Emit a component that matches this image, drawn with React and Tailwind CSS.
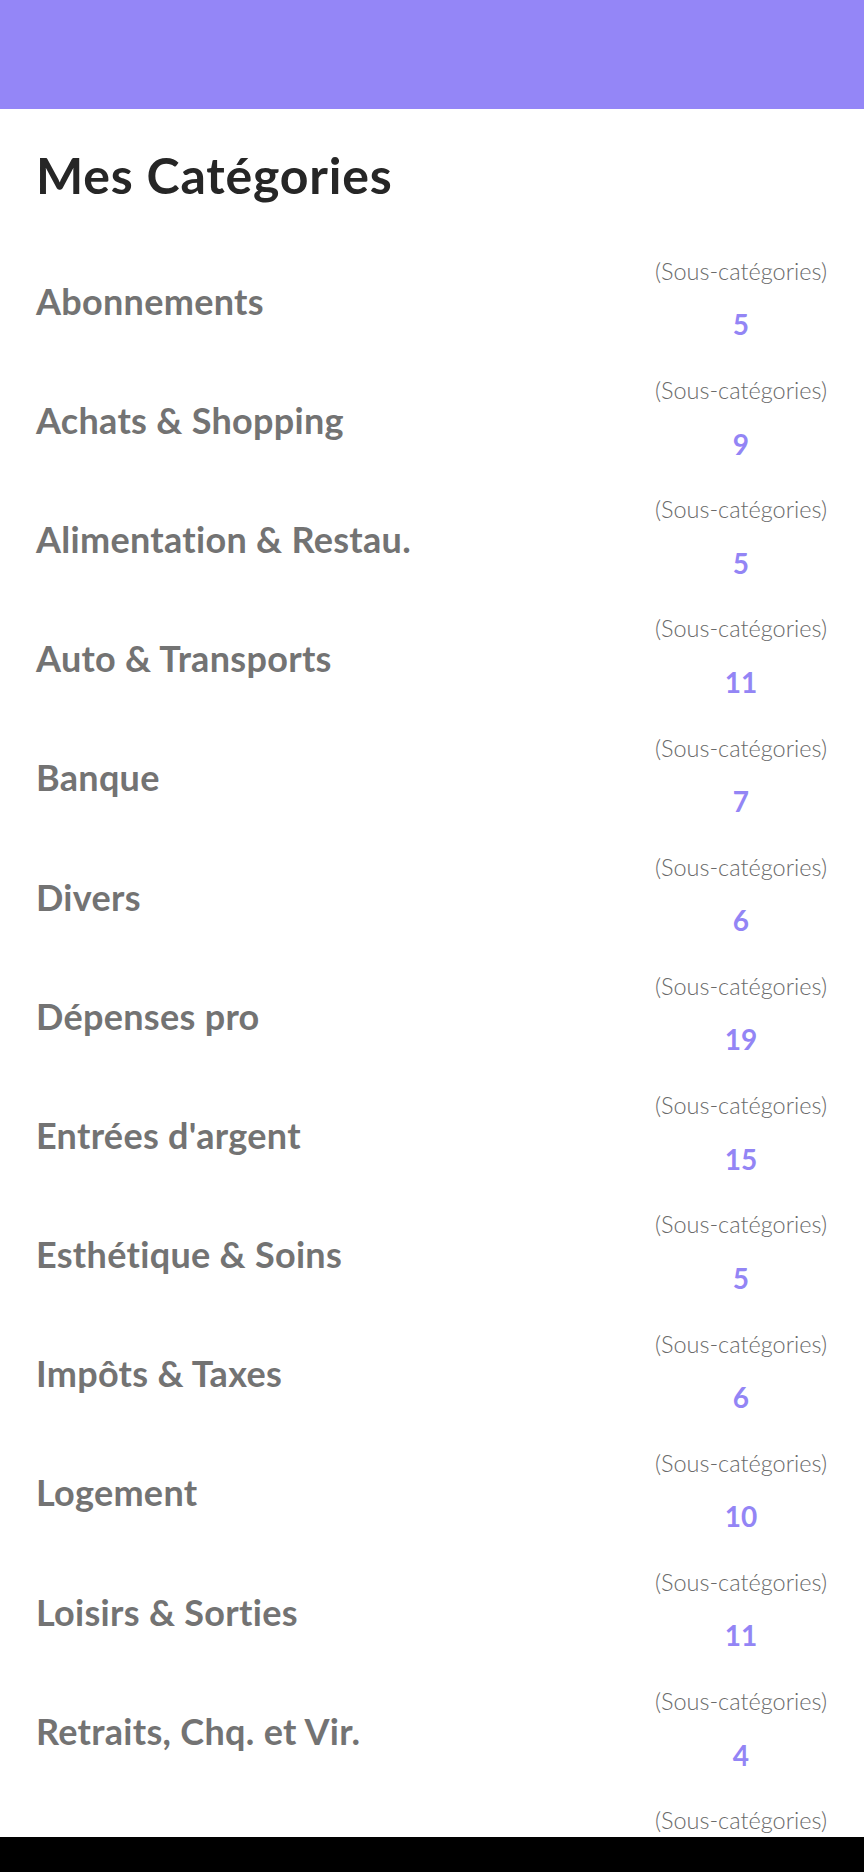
import React from "react";

const categories = [
  { name: "Abonnements", count: 5 },
  { name: "Achats & Shopping", count: 9 },
  { name: "Alimentation & Restau.", count: 5 },
  { name: "Auto & Transports", count: 11 },
  { name: "Banque", count: 7 },
  { name: "Divers", count: 6 },
  { name: "Dépenses pro", count: 19 },
  { name: "Entrées d'argent", count: 15 },
  { name: "Esthétique & Soins", count: 5 },
  { name: "Impôts & Taxes", count: 6 },
  { name: "Logement", count: 10 },
  { name: "Loisirs & Sorties", count: 11 },
  { name: "Retraits, Chq. et Vir.", count: 4 },
  { name: "", count: null },
];

function CategoryRow({ name, count }) {
  return (
    <div className="flex items-center justify-between h-[119.2px] shrink-0 pl-[36px] pr-[37px]">
      <span className="text-[36px] leading-none font-bold tracking-[0.3px] text-[#737373]">{name}</span>
      <div className="flex flex-col items-center gap-[27px] pb-[3px]">
        <span className="text-[23.5px] leading-none font-light text-[#6a6a6a]">
          (Sous-catégories)
        </span>
        <span className="h-[28px] text-[28px] leading-none font-bold text-[#9385f5]">{count}</span>
      </div>
    </div>
  );
}

export default function App() {
  return (
    <div
      className="flex flex-col h-[1872px] w-[864px] overflow-hidden bg-white"
      style={{ fontFamily: "Lato, 'Open Sans', sans-serif" }}
    >
      <div className="h-[109px] shrink-0 bg-[#9486f7]" />
      <div className="flex-1 flex flex-col overflow-hidden">
        <h1 className="mt-[41px] pl-[36px] text-[50px] leading-none font-bold tracking-[0.8px] text-[#262626]">
          Mes Catégories
        </h1>
        <div className="mt-[41px] flex flex-col">
          {categories.map((c, i) => (
            <CategoryRow key={i} name={c.name} count={c.count} />
          ))}
        </div>
      </div>
      <div className="h-[35px] shrink-0 bg-black" />
    </div>
  );
}
